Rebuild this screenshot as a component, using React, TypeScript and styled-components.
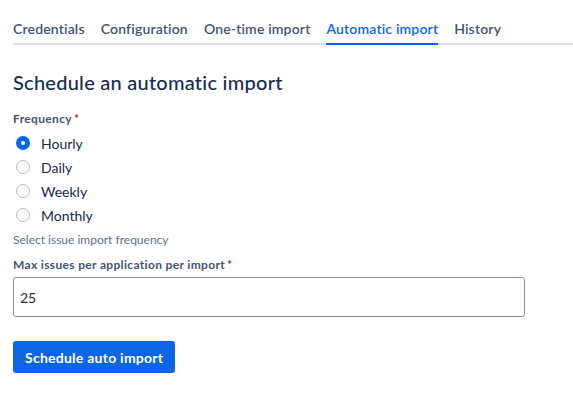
import React, { useState } from "react";
import styled, { createGlobalStyle } from "styled-components";

const Global = createGlobalStyle`
  html, body { margin: 0; padding: 0; background: #ffffff; }
  body { font-family: "Segoe UI", Lato, "Noto Sans", sans-serif; color: #172b4d; }
  * { box-sizing: border-box; }
`;

const Page = styled.div`
  padding: 11px 0 0 13px;
  display: flex;
  flex-direction: column;
`;

const TabList = styled.div`
  display: flex;
  gap: 16px;
  box-shadow: inset 0 -2px 0 #dcdfe4;
`;

const Tab = styled.div<{ $active?: boolean }>`
  padding: 8px 0 4px;
  font-size: 14px;
  line-height: 20px;
  font-weight: 600;
  letter-spacing: 0.17px;
  color: ${(p) => (p.$active ? "#0c66e4" : "#44546f")};
  border-bottom: 2px solid ${(p) => (p.$active ? "#0c66e4" : "transparent")};
  cursor: pointer;
`;

const Heading = styled.h2`
  margin: 25px 0 0;
  font-size: 20px;
  line-height: 24px;
  font-weight: 500;
  letter-spacing: 0.25px;
  color: #172b4d;
`;

const Label = styled.div<{ $top: number }>`
  margin-top: ${(p) => p.$top}px;
  font-size: 12px;
  line-height: 16px;
  font-weight: 700;
  letter-spacing: 0.34px;
  color: #44546f;
`;

const Required = styled.span`
  color: #ae2e24;
  margin-left: 2px;
`;

const RadioGroup = styled.div`
  margin-top: 4px;
  display: flex;
  flex-direction: column;
`;

const RadioRow = styled.label`
  display: flex;
  align-items: center;
  height: 24px;
  gap: 11px;
  font-size: 14px;
  color: #172b4d;
  cursor: pointer;
`;

const Circle = styled.span<{ $checked?: boolean }>`
  width: 14px;
  height: 14px;
  margin-left: 3px;
  border-radius: 50%;
  flex: none;
  background: ${(p) => (p.$checked ? "#0c66e4" : "#ffffff")};
  border: ${(p) => (p.$checked ? "none" : "1px solid #b3b9c4")};
  display: flex;
  align-items: center;
  justify-content: center;
  &::after {
    content: "";
    display: ${(p) => (p.$checked ? "block" : "none")};
    width: 4px;
    height: 4px;
    border-radius: 50%;
    background: #ffffff;
  }
`;

const Help = styled.div`
  margin-top: 5px;
  font-size: 12px;
  line-height: 16px;
  color: #626f86;
`;

const Input = styled.input`
  margin-top: 4px;
  width: 512px;
  height: 40px;
  border: 1px solid #8590a2;
  border-radius: 3px;
  padding: 0 6px;
  font-family: inherit;
  font-size: 14px;
  color: #172b4d;
  outline: none;
`;

const Button = styled.button`
  margin-top: 24px;
  align-self: flex-start;
  height: 32px;
  padding: 0 12px;
  border: none;
  border-radius: 3px;
  background: #0c66e4;
  color: #ffffff;
  font-family: inherit;
  font-size: 14px;
  font-weight: 700;
  letter-spacing: 0.25px;
  cursor: pointer;
`;

const tabs = ["Credentials", "Configuration", "One-time import", "Automatic import", "History"];
const options = ["Hourly", "Daily", "Weekly", "Monthly"];

export default function App() {
  const [freq, setFreq] = useState("Hourly");
  const [max, setMax] = useState("25");
  return (
    <>
      <Global />
      <Page>
        <TabList>
          {tabs.map((t) => (
            <Tab key={t} $active={t === "Automatic import"}>
              {t}
            </Tab>
          ))}
        </TabList>
        <Heading>Schedule an automatic import</Heading>
        <Label $top={17}>
          Frequency<Required>*</Required>
        </Label>
        <RadioGroup>
          {options.map((o) => (
            <RadioRow key={o} onClick={() => setFreq(o)}>
              <Circle $checked={freq === o} />
              {o}
            </RadioRow>
          ))}
        </RadioGroup>
        <Help>Select issue import frequency</Help>
        <Label $top={9}>
          Max issues per application per import<Required>*</Required>
        </Label>
        <Input value={max} onChange={(e) => setMax(e.target.value)} />
        <Button>Schedule auto import</Button>
      </Page>
    </>
  );
}
